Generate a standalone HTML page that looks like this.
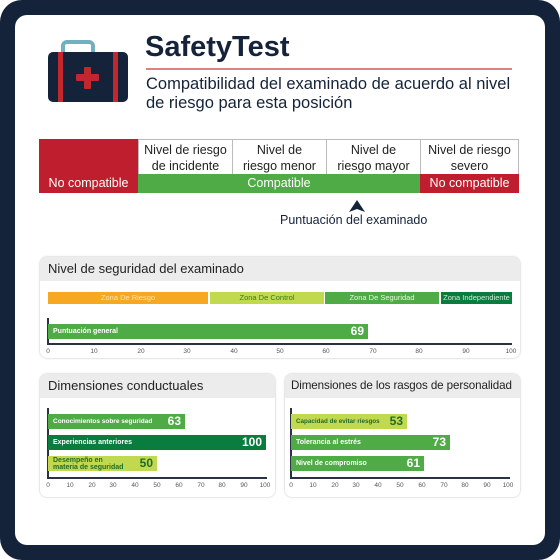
<!DOCTYPE html>
<html><head><meta charset="utf-8"><style>
*{margin:0;padding:0;box-sizing:border-box}
body{width:560px;height:560px;background:#fff;font-family:"Liberation Sans",sans-serif;position:relative;overflow:hidden}
.frame{position:absolute;left:0;top:0;width:560px;height:560px;background:#14233a;border-radius:22px}
.inner{position:absolute;left:15px;top:15px;width:530px;height:530px;background:#fff;border-radius:12px}
.a{position:absolute}
.t{position:absolute;white-space:nowrap}
.cell{position:absolute;border:1px solid #bbb;text-align:center;font-size:12.5px;color:#222;line-height:16px;padding-top:2px;background:#fff}
.panel{position:absolute;background:#fff;border-radius:7px;box-shadow:0 0 2px #bbb;overflow:hidden}
.ph{position:absolute;left:0;top:0;right:0;background:#ececec;font-size:13px;color:#222;padding-left:8px;white-space:nowrap}
.bar{position:absolute;height:15px;font-size:7px;font-weight:bold;color:#fff;padding-left:5px;line-height:15px;white-space:nowrap}
.bar b{position:absolute;right:4px;top:0;font-size:12px}
.ax{position:absolute;height:2px;background:#2a3142}
.vx{position:absolute;width:2px;background:#2a3142}
.tk{position:absolute;font-size:6.5px;color:#555;transform:translateX(-50%)}
.z{position:absolute;height:12px;font-size:7.5px;text-align:center;line-height:12px}
</style></head><body>
<div class="frame"></div><div class="inner"></div>
<svg class="a" style="left:46px;top:40px" width="86" height="64">
<rect x="17" y="2" width="30" height="14" rx="4" fill="none" stroke="#6fb1c0" stroke-width="4"/>
<rect x="2" y="12" width="80" height="50" rx="5" fill="#14233a"/>
<rect x="12" y="12" width="5" height="50" fill="#c1272d"/>
<rect x="67" y="12" width="5" height="50" fill="#c1272d"/>
<rect x="38" y="27" width="7" height="22" rx="1" fill="#c1272d"/>
<rect x="30" y="34" width="23" height="7" rx="1" fill="#c1272d"/>
</svg>
<div class="t" style="left:145px;top:31px;font-size:29px;font-weight:bold;color:#14233a">SafetyTest</div>
<div class="a" style="left:146px;top:68px;width:366px;height:2px;background:#e08080"></div>
<div class="t" style="left:146px;top:75px;font-size:16.5px;color:#14233a;line-height:18.5px">Compatibilidad del examinado de acuerdo al nivel<br>de riesgo para esta posición</div>

<div class="a" style="left:39px;top:139px;width:100px;height:36px;background:#be1e2d"></div>
<div class="cell" style="left:138px;top:139px;width:95px;height:36px">Nivel de riesgo<br>de incidente</div>
<div class="cell" style="left:232px;top:139px;width:95px;height:36px">Nivel de<br>riesgo menor</div>
<div class="cell" style="left:326px;top:139px;width:95px;height:36px">Nivel de<br>riesgo mayor</div>
<div class="cell" style="left:420px;top:139px;width:99px;height:36px">Nivel de riesgo<br>severo</div>
<div class="a" style="left:39px;top:174px;width:99px;height:19px;background:#be1e2d;color:#fff;font-size:12.5px;text-align:center;line-height:19px">No compatible</div>
<div class="a" style="left:138px;top:174px;width:282px;height:19px;background:#4fab46;color:#fff;font-size:12.5px;text-align:center;line-height:19px">Compatible</div>
<div class="a" style="left:420px;top:174px;width:99px;height:19px;background:#be1e2d;color:#fff;font-size:12.5px;text-align:center;line-height:19px">No compatible</div>
<svg class="a" style="left:349px;top:200px" width="16" height="12"><path d="M8 0L16 12L8 9L0 12Z" fill="#14233a"/></svg>
<div class="t" style="left:280px;top:213px;font-size:12.5px;color:#14233a">Puntuación del examinado</div>

<div class="panel" style="left:40px;top:257px;width:480px;height:101px">
<div class="ph" style="height:24px;line-height:24px">Nivel de seguridad del examinado</div>
</div>
<div class="z" style="left:48px;top:292px;width:160px;background:#f7a823;color:#fde5b0">Zona De Riesgo</div>
<div class="z" style="left:210px;top:292px;width:114px;background:#c1d94f;color:#3a7a2a">Zona De Control</div>
<div class="z" style="left:325px;top:292px;width:114px;background:#4fab46;color:#e6f5e0">Zona De Seguridad</div>
<div class="z" style="left:441px;top:292px;width:71px;background:#0a7c3e;color:#d0ecd8">Zona Independiente</div>
<div class="vx" style="left:47px;top:318px;height:27px"></div>
<div class="bar" style="left:48px;top:324px;width:320px;background:#4fab46">Puntuación general<b>69</b></div>
<div class="ax" style="left:47px;top:343px;width:465px"></div>
<div class="tk" style="left:48px;top:348px">0</div><div class="tk" style="left:94px;top:348px">10</div><div class="tk" style="left:141px;top:348px">20</div><div class="tk" style="left:187px;top:348px">30</div><div class="tk" style="left:234px;top:348px">40</div><div class="tk" style="left:280px;top:348px">50</div><div class="tk" style="left:326px;top:348px">60</div><div class="tk" style="left:373px;top:348px">70</div><div class="tk" style="left:419px;top:348px">80</div><div class="tk" style="left:466px;top:348px">90</div><div class="tk" style="left:511px;top:348px">100</div>

<div class="panel" style="left:40px;top:374px;width:235px;height:123px">
<div class="ph" style="height:24px;line-height:24px">Dimensiones conductuales</div></div>
<div class="vx" style="left:47px;top:408px;height:71px"></div>
<div class="bar" style="left:48px;top:414px;width:137px;background:#4fab46;font-size:6.5px">Conocimientos sobre seguridad<b>63</b></div>
<div class="bar" style="left:48px;top:435px;width:218px;background:#0a7c3e">Experiencias anteriores<b>100</b></div>
<div class="bar" style="left:48px;top:456px;width:109px;background:#c1d94f;color:#1f6b2a;line-height:7.5px;padding-top:0.5px">Desempeño en<br>materia de seguridad<b style="line-height:15px;color:#1f6b2a">50</b></div>
<div class="ax" style="left:47px;top:477px;width:220px"></div>
<div class="tk" style="left:48px;top:482px">0</div><div class="tk" style="left:70px;top:482px">10</div><div class="tk" style="left:92px;top:482px">20</div><div class="tk" style="left:113px;top:482px">30</div><div class="tk" style="left:135px;top:482px">40</div><div class="tk" style="left:157px;top:482px">50</div><div class="tk" style="left:179px;top:482px">60</div><div class="tk" style="left:201px;top:482px">70</div><div class="tk" style="left:222px;top:482px">80</div><div class="tk" style="left:244px;top:482px">90</div><div class="tk" style="left:265px;top:482px">100</div>

<div class="panel" style="left:285px;top:374px;width:235px;height:123px">
<div class="ph" style="height:24px;line-height:24px;font-size:11.6px;padding-left:6px;letter-spacing:-0.1px">Dimensiones de los rasgos de personalidad</div></div>
<div class="vx" style="left:290px;top:408px;height:71px"></div>
<div class="bar" style="left:291px;top:414px;width:116px;background:#c1d94f;color:#1f6b2a;font-size:6.3px">Capacidad de evitar riesgos<b style="color:#1f6b2a">53</b></div>
<div class="bar" style="left:291px;top:435px;width:159px;background:#4fab46">Tolerancia al estrés<b>73</b></div>
<div class="bar" style="left:291px;top:456px;width:133px;background:#4fab46">Nivel de compromiso<b>61</b></div>
<div class="ax" style="left:290px;top:477px;width:220px"></div>
<div class="tk" style="left:291px;top:482px">0</div><div class="tk" style="left:313px;top:482px">10</div><div class="tk" style="left:335px;top:482px">20</div><div class="tk" style="left:356px;top:482px">30</div><div class="tk" style="left:378px;top:482px">40</div><div class="tk" style="left:400px;top:482px">50</div><div class="tk" style="left:422px;top:482px">60</div><div class="tk" style="left:444px;top:482px">70</div><div class="tk" style="left:465px;top:482px">80</div><div class="tk" style="left:487px;top:482px">90</div><div class="tk" style="left:508px;top:482px">100</div>
</body></html>
